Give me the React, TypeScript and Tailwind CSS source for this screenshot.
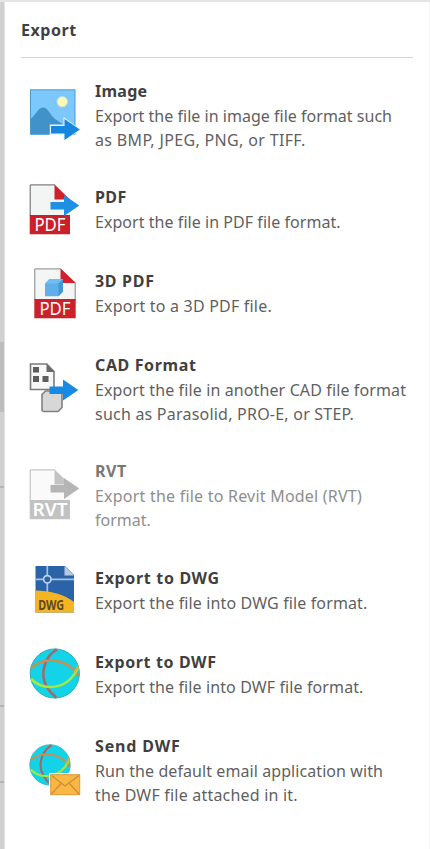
import { ReactNode } from "react";
import clsx from "clsx";

type ExportItem = {
  title: string;
  titleTracking: string;
  lines: { text: string; tracking: string }[];
  icon: ReactNode;
  textOffset?: string;
  disabled?: boolean;
};

function Arrow({ x, y, color, outline = "none" }: { x: number; y: number; color: string; outline?: string }) {
  return (
    <path
      transform={`translate(${x} ${y})`}
      d="M0 7h13.500V0L28.800 10.400 13.500 21v-6.500H0z"
      fill={color}
      stroke={outline}
    />
  );
}

function Icon({ children }: { children: ReactNode }) {
  return (
    <svg viewBox="0 0 52 52" className="block size-[52px] shrink-0 overflow-visible">
      {children}
    </svg>
  );
}

function ImageIcon() {
  return (
    <Icon>
      <rect x="2.500" y="0.800" width="44.500" height="44.500" fill="#7cc8fc" stroke="#4a9ad2" />
      <path d="M3 29.500C8 26 10 18.500 15 18.500S22 26 27 30L36 36 40 33 47 36V45H3z" fill="#4192c9" />
      <circle cx="34.300" cy="12.700" r="5.200" fill="#fdf8b8" stroke="#c3dfd0" strokeWidth="0.800" />
      <path d="M21.800 35.500H35.500V28l17.600 12.700L35.500 52v-6H21.800z" fill="#e6f4fe" />
      <Arrow x={23} y={30} color="#1687e0" />
    </Icon>
  );
}

function PdfIcon() {
  return (
    <Icon>
      <path d="M2.200 32V.9h24.600L42 15.500V32z" fill="#f3f4f4" />
      <path d="M2.200 32V.9h25" fill="none" stroke="#626262" />
      <path d="M26.500.5 42 15.500H26.500z" fill="#d0202a" />
      <path d="M1.700 31H42v19.300H1.700z" fill="#ca202a" />
      <text x="6.500" y="47.300" textLength="31" lengthAdjust="spacingAndGlyphs" fontSize="18" fill="#fff" className="font-['Noto_Sans','Open_Sans',sans-serif]">PDF</text>
      <Arrow x={22.500} y={11} color="#1f8fe4" />
    </Icon>
  );
}

function Pdf3dIcon() {
  return (
    <Icon>
      <path d="M6.800 32V.9h25.700l14.700 14V32z" fill="#f4f5f5" stroke="#858585" />
      <path d="M32.500.4 47.700 15H32.500z" fill="#d3202a" />
      <path d="M6.300 31h41.400v19.300H6.300z" fill="#cc202a" />
      <path d="m17 15.500 4.500-4.500h13.500v12.500l-4.500 4.800H17z" fill="#60aeea" />
      <path d="m17 15.500 4.500-4.500h13.500l-4.500 4.500z" fill="#72bdf2" />
      <path d="m30.500 15.500 4.500-4.500v12.500l-4.500 4.800z" fill="#4397d7" />
      <text x="11.500" y="47.300" textLength="31" lengthAdjust="spacingAndGlyphs" fontSize="18" fill="#fff" className="font-['Noto_Sans','Open_Sans',sans-serif]">PDF</text>
    </Icon>
  );
}

function CadIcon() {
  return (
    <Icon>
      <path d="M2.500 1h16.300L26 8.500V26.500H2.500z" fill="#f7f7f7" stroke="#7b7b7b" strokeWidth="1.600" />
      <path d="M18.500 1 26.500 9h-8z" fill="#686868" />
      <path d="M5 4h6v5.500H5zM5 13h6v6H5zM14.500 13h6v6h-6z" fill="#5d5d5d" />
      <path d="M14 31.500 17.500 28H34v16.500L30 48.500H16q-2 0-2-2z" fill="#d7d7d7" stroke="#818181" strokeWidth="1.600" />
      <Arrow x={21.500} y={16.500} color="#188ae3" />
    </Icon>
  );
}

function RvtIcon() {
  return (
    <Icon>
      <path d="M2.200 32V.9h24.600L42 15.500V32z" fill="#fafafa" />
      <path d="M2.200 32V.9h25" fill="none" stroke="#b9b9b9" />
      <path d="M26.500.5 42 15.500H26.500z" fill="#c3c3c3" />
      <path d="M1.700 31H42v19.300H1.700z" fill="#c2c2c2" />
      <text x="4.500" y="47" textLength="35" lengthAdjust="spacingAndGlyphs" fontSize="17.500" fontWeight="600" fill="#fff" className="font-['Noto_Sans','Open_Sans',sans-serif]">RVT</text>
      <Arrow x={22.500} y={9} color="#b5b5b5" />
    </Icon>
  );
}

function DwgIcon() {
  return (
    <Icon>
      <path d="M7.500 2H37l9 9v37.500H7.500z" fill="#2b63a8" />
      <path d="M36.500 2 46 11.500h-9.500z" fill="#b6cbe3" />
      <path d="M7.500 15.300H46M19.300 2v27" stroke="#a5c2e3" strokeWidth="1.700" />
      <circle cx="19.300" cy="15.300" r="3.700" fill="#2b63a8" stroke="#bdd4ee" strokeWidth="1.700" />
      <path d="M7.500 26.500C20 26.500 36 30 46 38v10.500H7.500z" fill="#f5b522" />
      <text x="10.200" y="46" textLength="26" lengthAdjust="spacingAndGlyphs" fontSize="13.500" fontWeight="700" fill="#5e4a21" className="font-['Noto_Sans','Open_Sans',sans-serif]">DWG</text>
    </Icon>
  );
}

function Globe() {
  return (
    <>
      <circle cx="26.800" cy="25.500" r="24.600" fill="#12d3e8" stroke="#28b0bd" />
      <path d="M28.800 1.500C17 8 11 26 19 39q3.500 6.500 9.500 10.500" fill="none" stroke="#a0696f" strokeWidth="2.600" />
      <path d="M3 20C16 8 39 10 51 28" fill="none" stroke="#c98e55" strokeWidth="2.500" />
      <path d="M3.200 31C15 43 39 43 50 20" fill="none" stroke="#a9e63f" strokeWidth="2.500" />
      <path d="M46 24Q50 20 50.300 17" fill="none" stroke="#d7b32d" strokeWidth="2" />
    </>
  );
}

function DwfIcon() {
  return (
    <Icon>
      <Globe />
    </Icon>
  );
}

function SendIcon() {
  return (
    <Icon>
      <g transform="scale(.82)">
        <Globe />
      </g>
      <rect x="21" y="29" width="32" height="23" fill="#fff" />
      <rect x="22.700" y="30.700" width="29" height="20" fill="#fbb744" stroke="#d89a39" />
      <path d="m23.500 31.500 13.500 10.500 14-10.500M23.500 50l9.500-10.500M51 50l-9.500-10.500" fill="none" stroke="#cd8e35" strokeWidth="1.300" />
    </Icon>
  );
}

const items: ExportItem[] = [
  {
    title: "Image",
    titleTracking: "tracking-[0.25px]",
    icon: <ImageIcon />,
    lines: [
      { text: "Export the file in image file format such", tracking: "tracking-[0.02px]" },
      { text: "as BMP, JPEG, PNG, or TIFF.", tracking: "tracking-[0.34px]" },
    ],
  },
  {
    title: "PDF",
    titleTracking: "tracking-[0.4px]",
    icon: <PdfIcon />,
    lines: [{ text: "Export the file in PDF file format.", tracking: "tracking-[0.05px]" }],
  },
  {
    title: "3D PDF",
    titleTracking: "tracking-[0.7px]",
    icon: <Pdf3dIcon />,
    lines: [{ text: "Export to a 3D PDF file.", tracking: "tracking-[0.2px]" }],
  },
  {
    title: "CAD Format",
    titleTracking: "tracking-[0.62px]",
    icon: <CadIcon />,
    lines: [
      { text: "Export the file in another CAD file format", tracking: "tracking-[0.12px]" },
      { text: "such as Parasolid, PRO-E, or STEP.", tracking: "tracking-[0.22px]" },
    ],
  },
  {
    title: "RVT",
    titleTracking: "tracking-[0.6px]",
    icon: <RvtIcon />,
    disabled: true,
    lines: [
      { text: "Export the file to Revit Model (RVT)", tracking: "tracking-[0.22px]" },
      { text: "format.", tracking: "" },
    ],
  },
  {
    title: "Export to DWG",
    titleTracking: "tracking-[0.67px]",
    textOffset: "pt-px",
    icon: <DwgIcon />,
    lines: [{ text: "Export the file into DWG file format.", tracking: "tracking-[0.13px]" }],
  },
  {
    title: "Export to DWF",
    titleTracking: "tracking-[0.62px]",
    textOffset: "pt-px",
    icon: <DwfIcon />,
    lines: [{ text: "Export the file into DWF file format.", tracking: "tracking-[0.11px]" }],
  },
  {
    title: "Send DWF",
    titleTracking: "tracking-[0.85px]",
    textOffset: "pt-px",
    icon: <SendIcon />,
    lines: [
      { text: "Run the default email application with", tracking: "tracking-[0.08px]" },
      { text: "the DWF file attached in it.", tracking: "tracking-[0.2px]" },
    ],
  },
];

export default function App() {
  return (
    <div className="flex h-[849px] w-[430px] overflow-hidden border-t-2 border-[#e5e5e5] bg-white font-['Noto_Sans','Open_Sans',sans-serif]">
      {/* edge of the menu behind the panel */}
      <div className="flex w-[5px] shrink-0 flex-col border-r border-[#e2e2e2] bg-[#d0d0d0]">
        <div className="h-[340px]" />
        <div className="h-[70px] bg-[#bdbdbd]" />
        <div className="h-[74px]" />
        <div className="h-[2px] bg-[#b5b5b5]" />
        <div className="h-[217px]" />
        <div className="h-[2px] bg-[#b5b5b5]" />
        <div className="h-[74px]" />
        <div className="h-[2px] bg-[#b5b5b5]" />
      </div>

      <div className="flex-1 border-r border-[#f5f5f5] pr-4 pl-4">
        <h1 className="h-14 border-b border-[#d4d4d4] pt-4 text-base leading-6 font-bold tracking-[0.55px] text-[#3f3f3f]">
          Export
        </h1>

        <div className="flex flex-col gap-8 pt-5 pl-[7px]">
          {items.map((item) => (
            <div key={item.title} className="flex min-h-[52px] items-center gap-[15px]">
              {item.icon}
              <div className={clsx("-mb-px self-start whitespace-nowrap", item.textOffset)}>
                <h2
                  className={clsx(
                    "text-base leading-[26px] font-bold",
                    item.titleTracking,
                    item.disabled ? "text-[#777]" : "text-[#3f3f3f]"
                  )}
                >
                  {item.title}
                </h2>
                {item.lines.map((line, i) => (
                  <p
                    key={line.text}
                    className={clsx(
                      "text-base leading-6",
                      i === item.lines.length - 1 && "mb-px",
                      line.tracking,
                      item.disabled ? "text-[#8e8e8e]" : "text-[#5f5f5f]"
                    )}
                  >
                    {line.text}
                  </p>
                ))}
              </div>
            </div>
          ))}
        </div>
      </div>
    </div>
  );
}
